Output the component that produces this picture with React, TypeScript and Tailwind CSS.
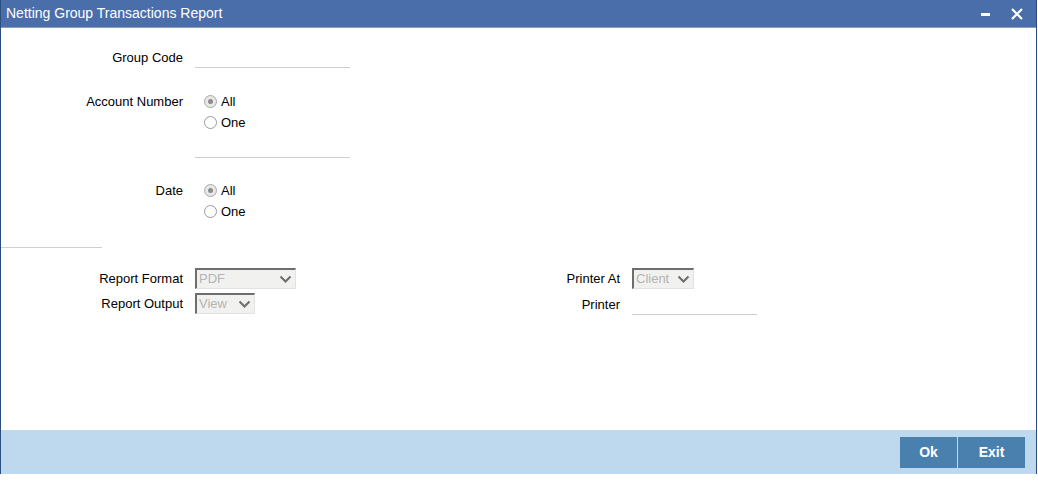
import React from "react";

const Radio = ({ checked, label }: { checked?: boolean; label: string }) => (
  <div className="flex h-[21px] items-center">
    <span
      className={
        "ml-[9px] flex h-[13px] w-[13px] items-center justify-center rounded-full border " +
        (checked ? "border-[#a8a8a8] bg-[#e8e8e8]" : "border-[#9a9a9a] bg-white")
      }
    >
      {checked && <span className="h-[5px] w-[5px] rounded-full bg-[#8c8c8c]" />}
    </span>
    <span className="ml-[4px] text-[13px] text-black">{label}</span>
  </div>
);

const Select = ({ value, width }: { value: string; width: string }) => (
  <div
    className={
      "flex h-[21px] items-center justify-between border-t-2 border-l-2 border-b border-r border-t-[#6e6e6e] border-l-[#6e6e6e] border-b-[#e2e2e2] border-r-[#e2e2e2] bg-[#f1f1ef] pl-[2px] pr-[3px] text-[13px] text-[#b4b4b4] " +
      width
    }
  >
    <span>{value}</span>
    <svg width="13" height="9" viewBox="0 0 13 9">
      <path d="M1.5 1.5 L6.5 6.5 L11.5 1.5" fill="none" stroke="#6d6d6d" strokeWidth="2" />
    </svg>
  </div>
);

const Label = ({ children, className = "" }: { children: React.ReactNode; className?: string }) => (
  <div className={"text-right text-[13px] leading-[21px] text-black " + className}>{children}</div>
);

export default function App() {
  return (
    <div className="h-[483px] w-[1038px] bg-white font-['Liberation_Sans',Arial,sans-serif]">
      <div className="flex h-[474px] w-[1037px] flex-col border-l border-r border-[#2b4e7f]">
        <div className="flex h-[28px] items-center justify-between border-b border-[#8a9db4] bg-[#4a6ea9] pl-[5px] pr-[13px]">
          <span className="text-[14px] text-white">Netting Group Transactions Report</span>
          <div className="flex items-center gap-[21px]">
            <span className="mt-[2px] h-[3px] w-[9px] bg-white" />
            <svg width="12" height="12" viewBox="0 0 12 12">
              <path d="M1 1 L11 11 M11 1 L1 11" stroke="white" strokeWidth="2.2" />
            </svg>
          </div>
        </div>

        <div className="flex-1">
          <div className="mt-[18px] flex h-[22px] items-center">
            <Label className="w-[182px]">Group Code</Label>
            <div className="ml-[12px] h-[22px] w-[155px] border-b border-[#cfcfcf]" />
          </div>

          <div className="mt-[23px] flex">
            <Label className="w-[182px]">Account Number</Label>
            <div className="ml-[12px]">
              <Radio checked label="All" />
              <Radio label="One" />
              <div className="mt-[3px] h-[22px] w-[155px] border-b border-[#cfcfcf]" />
            </div>
          </div>

          <div className="mt-[22px] flex">
            <Label className="w-[182px]">Date</Label>
            <div className="ml-[12px]">
              <Radio checked label="All" />
              <Radio label="One" />
            </div>
          </div>

          <div className="mt-[25px] w-[101px] border-b border-[#cfcfcf]" />

          <div className="mt-[20px] flex">
            <div className="flex w-[499px] flex-col gap-[4px]">
              <div className="flex items-center">
                <Label className="w-[182px]">Report Format</Label>
                <div className="ml-[12px]">
                  <Select value="PDF" width="w-[101px]" />
                </div>
              </div>
              <div className="flex items-center">
                <Label className="w-[182px]">Report Output</Label>
                <div className="ml-[12px]">
                  <Select value="View" width="w-[60px]" />
                </div>
              </div>
            </div>
            <div className="flex flex-col gap-[4px]">
              <div className="flex items-center">
                <Label className="w-[120px]">Printer At</Label>
                <div className="ml-[12px]">
                  <Select value="Client" width="w-[62px]" />
                </div>
              </div>
              <div className="flex items-center">
                <Label className="w-[120px]">Printer</Label>
                <div className="ml-[12px] h-[22px] w-[125px] border-b border-[#cfcfcf]" />
              </div>
            </div>
          </div>
        </div>

        <div className="flex h-[44px] items-center justify-end bg-[#bed9ed] pr-[11px]">
          <div className="flex gap-[1px]">
            <button className="h-[31px] w-[57px] bg-[#4a80ae] text-[14px] font-bold text-white">Ok</button>
            <button className="h-[31px] w-[67px] bg-[#4a80ae] text-[14px] font-bold text-white">Exit</button>
          </div>
        </div>
      </div>
    </div>
  );
}
